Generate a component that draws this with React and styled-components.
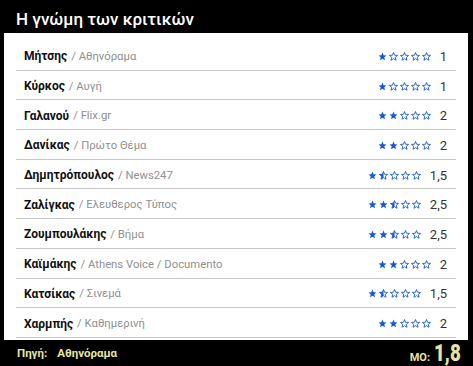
import React from "react";
import styled, { createGlobalStyle } from "styled-components";

const Global = createGlobalStyle`
  html, body { margin: 0; padding: 0; background: #000; }
  body { font-family: Roboto, "Noto Sans", sans-serif; }
`;

const Frame = styled.div`
  width: 473px;
  height: 366px;
  background: #000;
  box-sizing: border-box;
  padding: 0 5px 0 4px;
  display: flex;
  flex-direction: column;
  overflow: hidden;
`;

const Title = styled.h1`
  margin: 0;
  flex-shrink: 0;
  height: 33px;
  padding: 9px 0 0 12px;
  box-sizing: border-box;
  color: #fff;
  font-size: 17px;
  font-weight: 500;
  line-height: 20px;
`;

const Panel = styled.div`
  flex-shrink: 0;
  background: #fff;
  padding: 8px 12px 2px;
  display: flex;
  flex-direction: column;
`;

const Row = styled.div`
  height: 29.7px;
  box-sizing: border-box;
  border-bottom: 1px solid #c8c8c8;
  display: flex;
  align-items: center;
  padding: 2px 8px 0;
`;

const Name = styled.span`
  font-weight: 700;
  font-size: 12px;
  color: #111;
`;

const Source = styled.span`
  color: #909090;
  font-size: 11.3px;
  margin-left: 4px;
`;

const Rating = styled.div`
  margin-left: auto;
  display: flex;
  align-items: center;
  gap: 9px;
`;

const Stars = styled.div`
  display: flex;
  gap: 2px;
`;

const Score = styled.span`
  color: #333;
  font-size: 13px;
  min-width: 7px;
  text-align: right;
  margin-right: 1px;
`;

const Footer = styled.div`
  flex: 1;
  min-height: 0;
  display: flex;
  align-items: center;
  justify-content: space-between;
  padding: 1px 12px 0 13px;
  color: #e6e4a4;
  font-weight: 700;
`;

const SourceLabel = styled.span`
  font-size: 11.5px;
  span { margin-left: 10px; }
`;

const Avg = styled.span`
  display: flex;
  align-items: baseline;
  font-size: 11px;
  line-height: 1;
  b {
    font-size: 24px;
    margin-left: 4px;
    display: inline-block;
    font-family: Roboto, sans-serif;
    transform: scaleX(0.78);
    transform-origin: left;
    width: 22px;
  }
`;

const BLUE = "#1758d8";
const STAR = "M5 0.6 L6.2 3.6 L9.5 3.8 L7 5.9 L7.8 9.2 L5 7.4 L2.2 9.2 L3 5.9 L0.5 3.8 L3.8 3.6 Z";

function Star({ fill, id }) {
  return (
    <svg width="9" height="9" viewBox="0 0 10 10">
      <defs>
        <clipPath id={id}>
          <rect x="0" y="0" width="5" height="10" />
        </clipPath>
      </defs>
      {fill === 1 && <path d={STAR} fill={BLUE} />}
      {fill !== 1 && (
        <path d={STAR} fill="none" stroke={BLUE} strokeWidth="1" strokeLinejoin="round" />
      )}
      {fill === 0.5 && <path d={STAR} fill={BLUE} clipPath={`url(#${id})`} />}
    </svg>
  );
}

const data = [
  ["Μήτσης", "Αθηνόραμα", 1],
  ["Κύρκος", "Αυγή", 1],
  ["Γαλανού", "Flix.gr", 2],
  ["Δανίκας", "Πρώτο Θέμα", 2],
  ["Δημητρόπουλος", "News247", 1.5],
  ["Ζαλίγκας", "Ελευθερος Τύπος", 2.5],
  ["Ζουμπουλάκης", "Βήμα", 2.5],
  ["Καϊμάκης", "Athens Voice / Documento", 2],
  ["Κατσίκας", "Σινεμά", 1.5],
  ["Χαρμπής", "Καθημερινή", 2],
];

export default function App() {
  return (
    <>
      <Global />
      <Frame>
        <Title>Η γνώμη των κριτικών</Title>
        <Panel>
          {data.map(([n, s, r], i) => (
            <Row key={n}>
              <Name>{n}</Name>
              <Source>/ {s}</Source>
              <Rating>
                <Stars>
                  {[0, 1, 2, 3, 4].map((k) => (
                    <Star
                      key={k}
                      id={`h${i}-${k}`}
                      fill={r >= k + 1 ? 1 : r >= k + 0.5 ? 0.5 : 0}
                    />
                  ))}
                </Stars>
                <Score>{String(r).replace(".", ",")}</Score>
              </Rating>
            </Row>
          ))}
        </Panel>
        <Footer>
          <SourceLabel>
            Πηγή:<span>Αθηνόραμα</span>
          </SourceLabel>
          <Avg>
            ΜΟ:<b>1,8</b>
          </Avg>
        </Footer>
      </Frame>
    </>
  );
}
